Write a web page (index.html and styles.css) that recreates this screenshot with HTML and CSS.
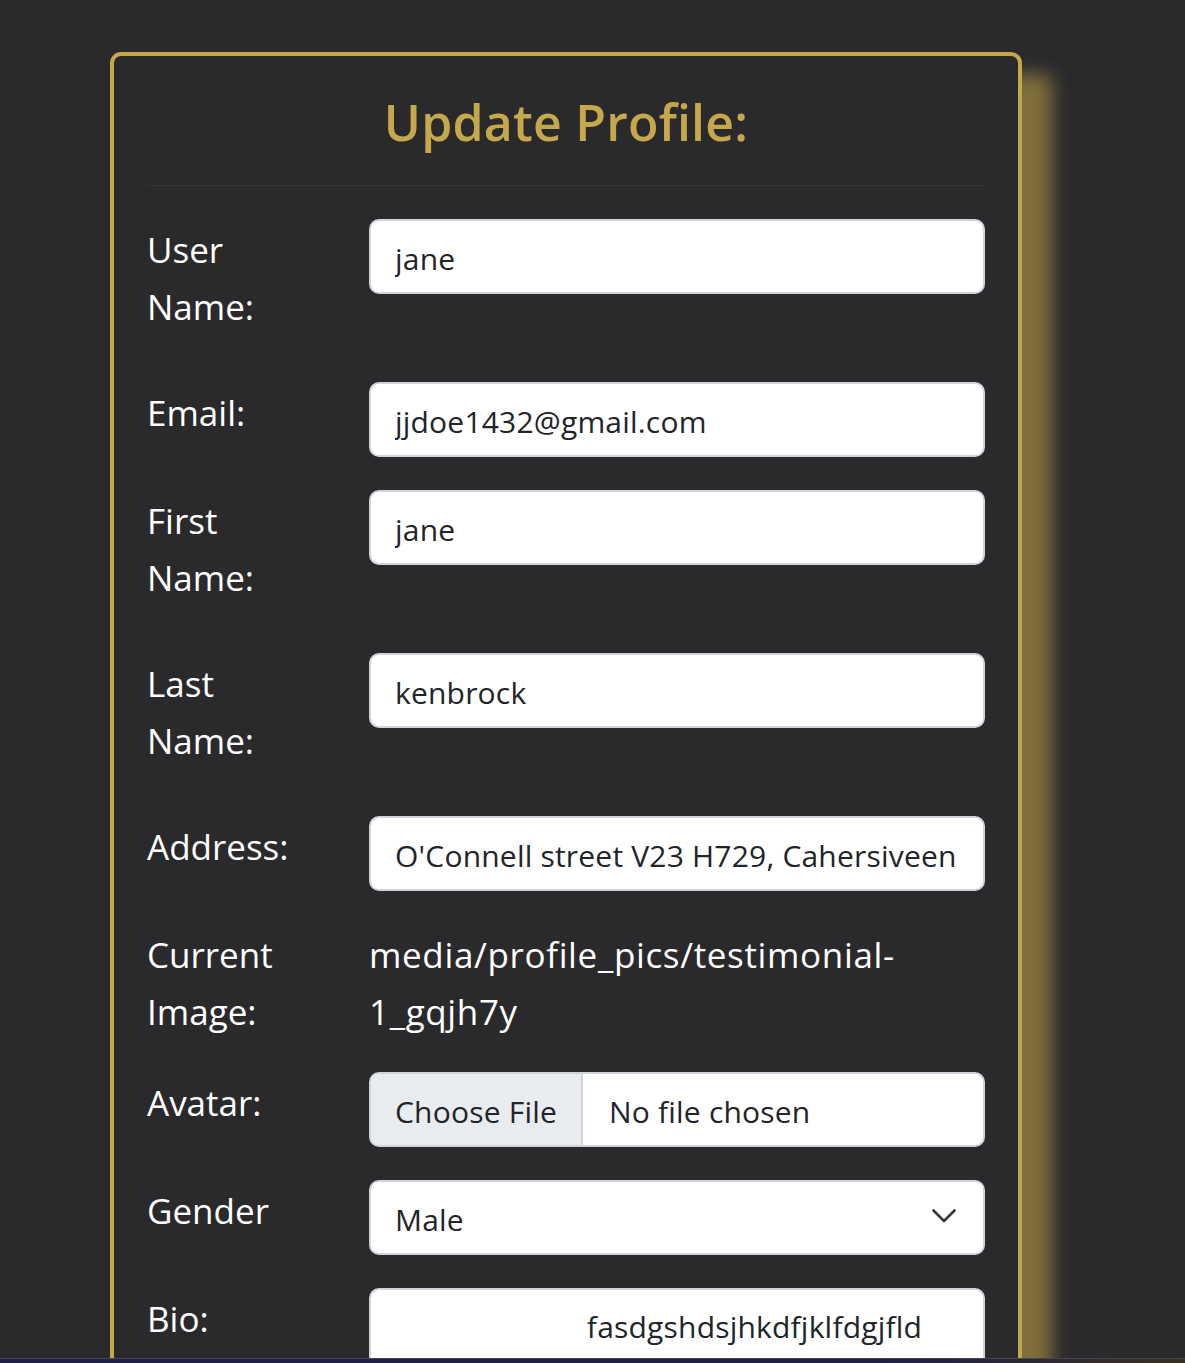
FILE: index.html
```html
<!DOCTYPE html>
<html lang="en">
<head>
<meta charset="utf-8">
<title>Update Profile</title>
<link rel="stylesheet" href="styles.css">
</head>
<body>
<div class="viewport">
  <main class="page">
    <section class="card">
      <header class="card-header">
        <h1 class="title">Update Profile:</h1>
      </header>
      <form class="form">
        <div class="row">
          <label class="label" for="username">User Name:</label>
          <input class="control" id="username" type="text" value="jane">
        </div>
        <div class="row">
          <label class="label" for="email">Email:</label>
          <input class="control" id="email" type="text" value="jjdoe1432@gmail.com">
        </div>
        <div class="row">
          <label class="label" for="first">First Name:</label>
          <input class="control" id="first" type="text" value="jane">
        </div>
        <div class="row">
          <label class="label" for="last">Last Name:</label>
          <input class="control" id="last" type="text" value="kenbrock">
        </div>
        <div class="row">
          <label class="label" for="address">Address:</label>
          <input class="control" id="address" type="text" value="O'Connell street V23 H729, Cahersiveen">
        </div>
        <div class="row row-tight">
          <span class="label">Current Image:</span>
          <span class="value">media/profile_pics/testimonial-<wbr>1_gqjh7y</span>
        </div>
        <div class="row">
          <span class="label">Avatar:</span>
          <div class="file-control">
            <span class="file-btn">Choose File</span>
            <span class="file-name">No file chosen</span>
          </div>
        </div>
        <div class="row">
          <label class="label" for="gender">Gender</label>
          <div class="select-wrap">
            <select class="control select" id="gender">
              <option>Male</option>
              <option>Female</option>
            </select>
            <svg class="chevron" width="24" height="14" viewBox="0 0 24 14" aria-hidden="true">
              <polyline points="1.5,1.5 12,12 22.5,1.5" fill="none" stroke="#343a40" stroke-width="2.6" stroke-linecap="round" stroke-linejoin="round"/>
            </svg>
          </div>
        </div>
        <div class="row">
          <label class="label" for="bio">Bio:</label>
          <textarea class="control textarea" id="bio">                        fasdgshdsjhkdfjklfdgjfld</textarea>
        </div>
      </form>
    </section>
  </main>
  <footer class="footer"></footer>
</div>
</body>
</html>
```

FILE: styles.css
```css
* {
  box-sizing: border-box;
}

html, body {
  margin: 0;
  padding: 0;
  background: #2a2a2c;
}

body {
  font-family: "Open Sans", "Noto Sans", "Liberation Sans", sans-serif;
  color: #ffffff;
}

.viewport {
  height: 1363px;
  overflow: hidden;
  display: flex;
  flex-direction: column;
}

.page {
  height: 1358px;
  flex: none;
  overflow: hidden;
  padding: 52px 0 0 110px;
}

.card {
  width: 912px;
  border: 4px solid #c5a84b;
  border-radius: 11px;
  background: #2a2a2c;
  box-shadow: 30px 22px 18px rgba(196, 168, 74, 0.55);
  padding: 0 33px 40px;
}

.card-header {
  padding: 36px 0 33px;
  border-bottom: 1px solid rgba(255, 255, 255, 0.045);
}

.title {
  margin: 0;
  text-align: center;
  font-size: 50px;
  line-height: 60px;
  font-weight: 600;
  color: #c5a84b;
  letter-spacing: 0.2px;
}

.form {
  padding-top: 33px;
}

.row {
  display: grid;
  grid-template-columns: 160px 1fr;
  column-gap: 62px;
  align-items: start;
  margin-bottom: 33px;
}

.row-tight {
  margin-bottom: 18px;
}

.label,
.value {
  font-size: 35px;
  line-height: 57px;
  padding: 2px 0 14px;
  color: #ffffff;
}

.value {
  display: block;
  letter-spacing: 0.65px;
}

.control {
  display: block;
  width: 100%;
  height: 75px;
  margin: 0;
  padding: 3px 24px 0;
  border: 2px solid #ced4da;
  border-radius: 10px;
  background: #ffffff;
  color: #212529;
  font-family: inherit;
  font-size: 30px;
  line-height: 45px;
  letter-spacing: 0.2px;
  outline: none;
}

.select-wrap {
  position: relative;
}

.select {
  appearance: none;
  -webkit-appearance: none;
  padding-right: 70px;
}

.chevron {
  position: absolute;
  top: 29px;
  right: 29px;
  pointer-events: none;
}

.file-control {
  display: flex;
  height: 75px;
  border: 2px solid #ced4da;
  border-radius: 10px;
  background: #ffffff;
  overflow: hidden;
  font-size: 30px;
  line-height: 45px;
  letter-spacing: 0.2px;
  color: #212529;
}

.file-btn {
  display: flex;
  align-items: center;
  padding: 3px 24px 0 24px;
  background: #e9ecef;
  border-right: 2px solid #ced4da;
}

.file-name {
  display: flex;
  align-items: center;
  padding: 3px 0 0 26px;
}

.textarea {
  height: 160px;
  padding: 14px 24px 12px;
  resize: none;
  white-space: pre-wrap;
}

.footer {
  flex: none;
  height: 5px;
  border-top: 1px solid #45454e;
  background: linear-gradient(90deg, #1f2147 0%, #1f2147 75%, #3a301f 100%);
}
```
